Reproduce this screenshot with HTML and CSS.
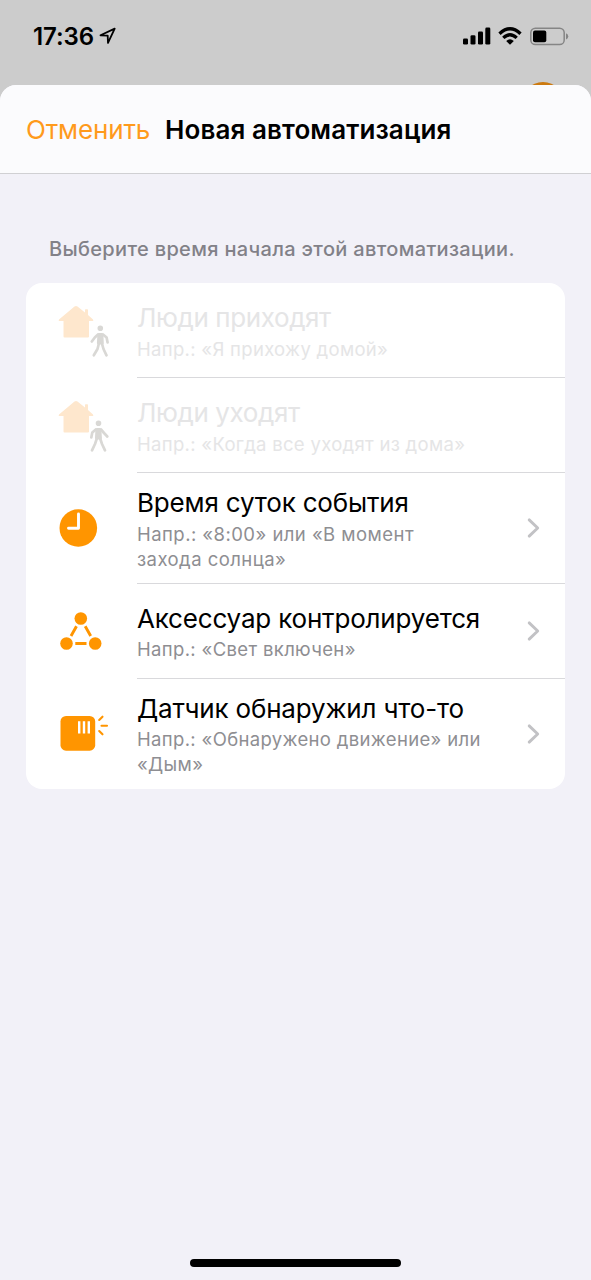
FILE: index.html
```html
<!DOCTYPE html>
<html lang="ru">
<head>
<meta charset="utf-8">
<title>Новая автоматизация</title>
<link rel="stylesheet" href="styles.css">
</head>
<body>
<svg class="defs" width="0" height="0">
  <symbol id="house" viewBox="0 0 36 33"><path d="M16.500 1Q18 0 19.500 1L27 7V4.500Q27 3.800 27.700 3.800H29.300Q30 3.800 30 4.500V9.500L35 14Q36 15.500 34.500 15.500H31V31Q31 32 30 32H6.500Q5.500 32 5.500 31V15.500H1.500Q0 15.500 1 14Z"/></symbol>
  <symbol id="chevron" viewBox="0 0 14 22"><path d="M3.200 2.900L11.700 11L3.200 19.100" fill="none" stroke="#c2c2c5" stroke-width="2.900" stroke-linecap="round" stroke-linejoin="round"/></symbol>
</svg>
<div class="screen">
  <header class="status">
    <span class="time">17:36</span>
    <svg class="location" width="18" height="18" viewBox="0 0 18 18"><path d="M1.500 8.300L15.700 1.600L9 15.900L8.700 8.600Z" fill="none" stroke="#000" stroke-width="1.800" stroke-linejoin="round"/></svg>
    <span class="spacer"></span>
    <svg class="signal" width="28" height="18" viewBox="0 0 28 18"><rect x="0" y="11.500" width="5" height="6" rx="1.300"/><rect x="7.500" y="8.300" width="5" height="9.200" rx="1.300"/><rect x="15" y="4.500" width="5" height="13" rx="1.300"/><rect x="22.300" y=".6" width="5" height="16.900" rx="1.300"/></svg>
    <svg class="wifi" width="24" height="18" viewBox="0 0 24 18"><g fill="none" stroke="#000" stroke-width="3.300"><path d="M1.500 6.700Q12-3.200 22.500 6.700"/><path d="M5.300 10.900Q12 4.500 18.700 10.900"/></g><path d="M8.200 14Q12 10.600 15.800 14L12.600 17.200Q12 17.700 11.400 17.200Z"/></svg>
    <svg class="battery" width="39" height="19" viewBox="0 0 39 19"><rect x=".8" y="1.200" width="33.400" height="16.300" rx="4.600" fill="none" stroke="#858585" stroke-width="1.500"/><rect x="3" y="3.500" width="13.300" height="11.700" rx="2"/><path d="M36 6.300Q38.300 7.300 38.300 9.400Q38.300 11.500 36 12.500Z" fill="#858585"/></svg>
    <span class="behind-button"></span>
  </header>
  <main class="sheet">
    <nav class="navbar">
      <a class="cancel">Отменить</a>
      <h1 class="heading">Новая автоматизация</h1>
    </nav>
    <p class="prompt">Выберите время начала этой автоматизации.</p>
    <ul class="card">
      <li class="row disabled">
        <svg class="icon" width="60" height="56" viewBox="0 0 60 56"><use href="#house" x="5" y="2.500" width="36" height="33" fill="#fee7cd"/><g fill="none" stroke="#d9d8d5" stroke-linecap="round" stroke-linejoin="round"><circle cx="47.300" cy="25.300" r="1.400" stroke-width="2.800"/><path d="M46 31.500H48.800L49.200 40H45.500Z" fill="#d9d8d5" stroke-width="3.200"/><path d="M45 31.500L41.800 34.500L38.800 38.500M50 31.500L53.600 34.500L54.600 39.500M46 40L44.500 46L40.800 52.300M48.800 40L50.500 46L53.500 52.300" stroke-width="2.700"/></g></svg>
        <div class="copy"><span class="label">Люди приходят</span><span class="hint">Напр.: «Я прихожу домой»</span></div>
      </li>
      <li class="row disabled">
        <svg class="icon" width="60" height="56" viewBox="0 0 60 56"><use href="#house" x="5" y="2.500" width="36" height="33" fill="#fee7cd"/><g fill="none" stroke="#d9d8d5" stroke-linecap="round" stroke-linejoin="round"><circle cx="45.500" cy="25.300" r="1.400" stroke-width="2.800"/><path d="M44 31.500H46.800L47.300 40H43.600Z" fill="#d9d8d5" stroke-width="3.200"/><path d="M42.800 31.500L39.300 34.500L38.300 39.500M48 31.500L51 35L54.300 38.500M44 40L42 46L39 52.300M47 40L49 46L52 52.300" stroke-width="2.700"/></g></svg>
        <div class="copy"><span class="label">Люди уходят</span><span class="hint">Напр.: «Когда все уходят из дома»</span></div>
      </li>
      <li class="row tall">
        <svg class="icon" width="60" height="56" viewBox="0 0 60 56"><circle cx="25.300" cy="28" r="18.800" fill="#ff9500"/><path d="M25.500 14V28.300H15.500" fill="none" stroke="#fff" stroke-width="2.900" stroke-linecap="round" stroke-linejoin="round"/></svg>
        <div class="copy"><span class="label">Время суток события</span><span class="hint loose">Напр.: «8:00» или «В момент<br>захода солнца»</span></div>
        <svg class="chevron" width="14" height="22"><use href="#chevron"/></svg>
      </li>
      <li class="row">
        <svg class="icon" width="60" height="56" viewBox="0 0 60 56"><g fill="#ff9500"><circle cx="27.800" cy="15.500" r="6.300"/><circle cx="13.500" cy="40.500" r="6.300"/><circle cx="42.200" cy="40.500" r="6.300"/></g><path d="M23.500 23.300L18 33M32.200 23.300L37.700 33M22.300 40.500H33.500" stroke="#ff9500" stroke-width="2.900"/></svg>
        <div class="copy"><span class="label">Аксессуар контролируется</span><span class="hint">Напр.: «Свет включен»</span></div>
        <svg class="chevron" width="14" height="22"><use href="#chevron"/></svg>
      </li>
      <li class="row tall">
        <svg class="icon" width="60" height="56" viewBox="0 0 60 56"><rect x="7.500" y="10" width="34.700" height="34.700" rx="5.500" fill="#ff9500"/><path d="M26.200 15.300V27.500M31 15.300V27.500M35.800 15.300V27.500" stroke="#fff" stroke-width="2.400"/><path d="M46.200 14L49.500 10.700M48.500 19.700H54M46.200 25L49.500 28.300" stroke="#ff9500" stroke-width="2.100" stroke-linecap="round"/></svg>
        <div class="copy"><span class="label">Датчик обнаружил что-то</span><span class="hint">Напр.: «Обнаружено движение» или<br>«Дым»</span></div>
        <svg class="chevron" width="14" height="22"><use href="#chevron"/></svg>
      </li>
    </ul>
    <div class="home-bar"></div>
  </main>
</div>
</body>
</html>
```
FILE: styles.css
```css
* { box-sizing: border-box; }
body { margin: 0; font-family: Inter, "Noto Sans", sans-serif; color: #000; background: #ccc; }
.defs { position: absolute; }
.screen { width: 591px; height: 1280px; display: flex; flex-direction: column; overflow: hidden; }
.status { position: relative; flex: none; height: 85px; padding: 20px 22px 0 33px; display: flex; align-items: flex-start; }
.time { font-size: 24px; font-weight: 600; line-height: 34px; letter-spacing: -0.1px; }
.location { margin: 7px 0 0 5px; }
.spacer { flex: 1; }
.signal { margin: 7px 7px 0 0; }
.wifi { margin: 7px 8px 0 0; }
.battery { margin-top: 7px; }
.behind-button { position: absolute; left: 521px; top: 82px; width: 44px; height: 44px; border-radius: 50%; background: #cc7a10; }
.sheet { position: relative; flex: 1; display: flex; flex-direction: column; background: #f2f1f8; border-radius: 16px 16px 0 0; overflow: hidden; }
.navbar { flex: none; height: 89px; padding: 2px 0 0 26px; display: flex; align-items: center; gap: 15px; background: #fbfbfd; border-bottom: 1px solid #d0d0d3; }
.cancel, .heading { margin: 0; font-size: 26px; line-height: 32px; white-space: nowrap; }
.cancel { color: #ff9a1c; width: 124px; letter-spacing: -0.15px; }
.heading { font-weight: 600; letter-spacing: 0.1px; }
.prompt { margin: 61px 0 0 49px; font-size: 20px; font-weight: 500; line-height: 28px; letter-spacing: 0.33px; color: #828188; white-space: nowrap; }
.card { list-style: none; margin: 20px 26px 0; padding: 0; background: #fff; border-radius: 16px; }
.row { position: relative; height: 95px; padding: 0 25px 0 27px; display: flex; align-items: center; }
.row.tall { height: 110.5px; }
.row + .row::before { content: ""; position: absolute; left: 111px; right: 0; top: -1px; height: 1px; background: #d9d9dc; }
.icon { flex: none; }
.copy { flex: 1; margin-left: 24px; display: flex; flex-direction: column; white-space: nowrap; }
.label { font-size: 26px; line-height: 34px; letter-spacing: -0.18px; }
.hint { margin: 1.5px 0 -1.5px; font-size: 18.5px; line-height: 25px; color: #8e8e92; letter-spacing: 0.34px; }
.hint.loose { letter-spacing: 0.45px; }
.disabled .label { letter-spacing: -0.4px; }
.disabled .hint { letter-spacing: 0.3px; }
.disabled .label, .disabled .hint { color: #e5e5e6; }
.chevron { flex: none; }
.home-bar { position: absolute; left: 190px; bottom: 13px; width: 211px; height: 8px; border-radius: 4px; background: #000; }
```
